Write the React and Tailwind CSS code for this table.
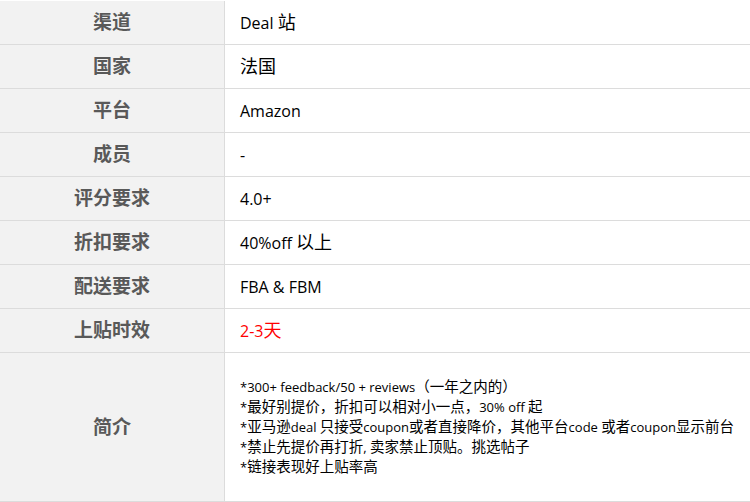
import React from "react";

const rows = [
  ["渠道", "Deal 站"],
  ["国家", "法国"],
  ["平台", "Amazon"],
  ["成员", "-"],
  ["评分要求", "4.0+"],
  ["折扣要求", "40%off 以上"],
  ["配送要求", "FBA & FBM"],
  ["上贴时效", "2-3天", true],
];

const intro = [
  "*300+ feedback/50 + reviews（一年之内的）",
  "*最好别提价，折扣可以相对小一点，30% off 起",
  "*亚马逊deal 只接受coupon或者直接降价，其他平台code 或者coupon显示前台",
  "*禁止先提价再打折, 卖家禁止顶贴。挑选帖子",
  "*链接表现好上贴率高",
];

const font = { fontFamily: '"Open Sans", "Noto Sans CJK SC", sans-serif' };

function Mixed({ text, cjkClass }) {
  const parts = text.split(/([\u3000-\u303f\u4e00-\u9fff\uff00-\uffef]+)/).filter(Boolean);
  return (
    <>
      {parts.map((p, i) =>
        /[\u3000-\u303f\u4e00-\u9fff\uff00-\uffef]/.test(p) ? (
          <span key={i} className={cjkClass}>{p}</span>
        ) : (
          <span key={i}>{p}</span>
        )
      )}
    </>
  );
}

export default function App() {
  return (
    <div className="w-[750px] h-[502px] bg-white overflow-hidden pt-[1px]" style={font}>
      {rows.map(([k, v, red]) => (
        <div key={k} className="flex h-[44px] border-b border-[#dcdcdc]">
          <div className="w-[225px] shrink-0 bg-[#f2f2f2] border-r border-[#dcdcdc] flex items-center justify-center text-[19px] font-bold text-[#595959]">
            {k}
          </div>
          <div className={`flex-1 flex items-center pl-[15px] text-[16px] ${red ? "text-[#ff0000]" : "text-black"}`}>
            <div>
              <Mixed text={v} cjkClass="text-[18px]" />
            </div>
          </div>
        </div>
      ))}
      <div className="flex h-[149px] border-b border-[#dcdcdc]">
        <div className="w-[225px] shrink-0 bg-[#f2f2f2] border-r border-[#dcdcdc] flex items-center justify-center text-[19px] font-bold text-[#595959]">
          简介
        </div>
        <div className="flex-1 flex flex-col justify-center pl-[15px] text-[13px] leading-[20px] text-black whitespace-nowrap">
          {intro.map((t) => (
            <div key={t} className="h-[20px]">
              <Mixed text={t} cjkClass="text-[14.5px]" />
            </div>
          ))}
        </div>
      </div>
    </div>
  );
}
